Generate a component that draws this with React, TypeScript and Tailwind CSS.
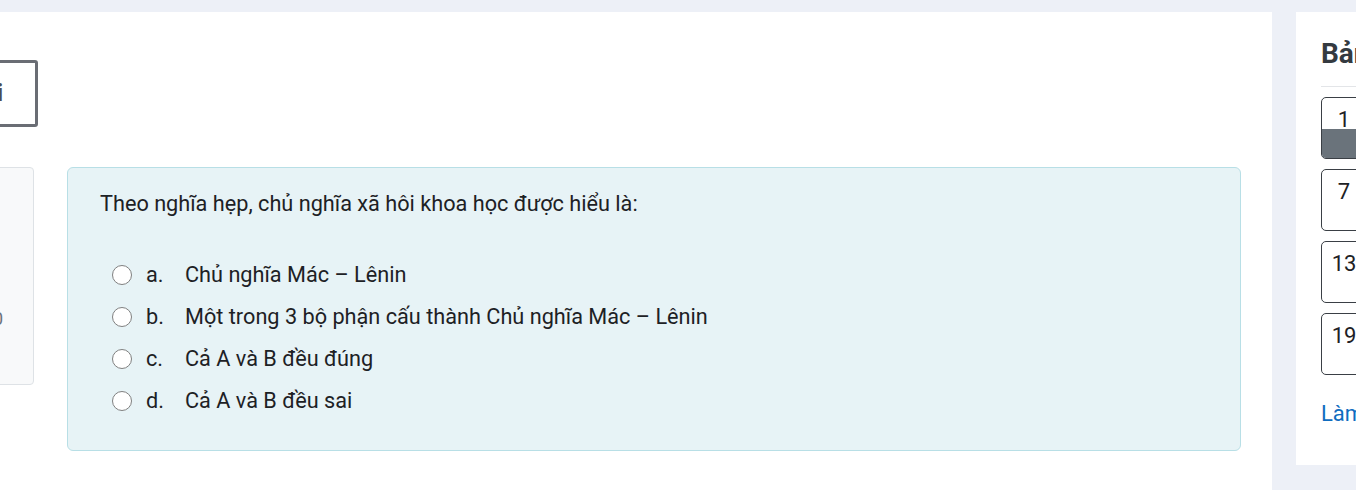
import React from 'react';

const answers = [
  { key: 'a.', text: 'Chủ nghĩa Mác – Lênin' },
  { key: 'b.', text: 'Một trong 3 bộ phận cấu thành Chủ nghĩa Mác – Lênin' },
  { key: 'c.', text: 'Cả A và B đều đúng' },
  { key: 'd.', text: 'Cả A và B đều sai' },
];

const navRows = [
  [1, 2, 3, 4, 5, 6],
  [7, 8, 9, 10, 11, 12],
  [13, 14, 15, 16, 17, 18],
  [19, 20, 21, 22, 23, 24],
];

const App = () => {
  return (
    <div
      className="flex h-[490px] w-[1356px] overflow-hidden bg-[#edf0f7] pt-[12px] text-[#1d2125]"
      style={{ fontFamily: 'Roboto, "Noto Sans", sans-serif' }}
    >
      {/* Main question area */}
      <div className="h-[478px] w-[1272px] shrink-0 overflow-hidden bg-white">
        <div className="ml-[-100px] mt-[48px] flex h-[67px] w-[138px] items-center justify-end rounded-[3px] border-[3px] border-[#6a6d74] pt-[2px] pr-[32px] text-[23px] font-bold text-[#4a4d55]">
          Câu hỏi
        </div>

        <div className="mt-[40px] flex items-start">
          {/* Question info */}
          <div className="ml-[-141px] flex h-[218px] w-[175px] shrink-0 flex-col justify-end rounded-[4px] border border-[#dee2e6] bg-[#f8f9fa] pb-[52px] pr-[30px] text-right text-[18px] text-[#6a737b]">
            Đạt điểm 1,00
          </div>

          {/* Question content */}
          <div className="ml-[33px] h-[284px] w-[1174px] shrink-0 rounded-[6px] border border-[#b8dfe6] bg-[#e7f3f6] pl-[32px] pt-[21px]">
            <p className="text-[21.7px] leading-[30px]">
              Theo nghĩa hẹp, chủ nghĩa xã hôi khoa học được hiểu là:
            </p>
            <div className="mt-[35px] flex flex-col">
              {answers.map((a) => (
                <label key={a.key} className="flex h-[42px] items-center text-[21.7px]">
                  <span className="ml-[12px] h-[20px] w-[20px] shrink-0 rounded-full border-[1.5px] border-[#808080] bg-white" />
                  <span className="ml-[14px] w-[39px]">{a.key}</span>
                  <span>{a.text}</span>
                </label>
              ))}
            </div>
          </div>
        </div>
      </div>

      {/* Quiz navigation */}
      <div className="ml-[24px] h-[453px] w-[260px] shrink-0 bg-white pl-[25px] pr-[20px] pt-[24px]">
        <h2 className="text-[28px] font-bold leading-[36px] text-[#343a40]">Bảng câu hỏi</h2>
        <div className="mt-[14px] border-t border-[#e3e5e8]" />
        <div className="mt-[10px] flex flex-col gap-[10px]">
          {navRows.map((row, ri) => (
            <div key={ri} className="flex gap-[6px]">
              {row.map((n) => (
                <div
                  key={n}
                  className="flex h-[62px] w-[46px] shrink-0 flex-col overflow-hidden rounded-[5px] border border-[#3a3f45] bg-white"
                >
                  <div className="h-[31px] pt-[8px] text-center text-[22px] leading-[28px]">{n}</div>
                  <div className={n === 1 ? 'flex-1 bg-[#6a737b]' : 'flex-1'} />
                </div>
              ))}
            </div>
          ))}
        </div>
        <a className="mt-[22px] block text-[22px] text-[#0f6cbf]">Làm xong bài...</a>
      </div>
    </div>
  );
};

export default App;
